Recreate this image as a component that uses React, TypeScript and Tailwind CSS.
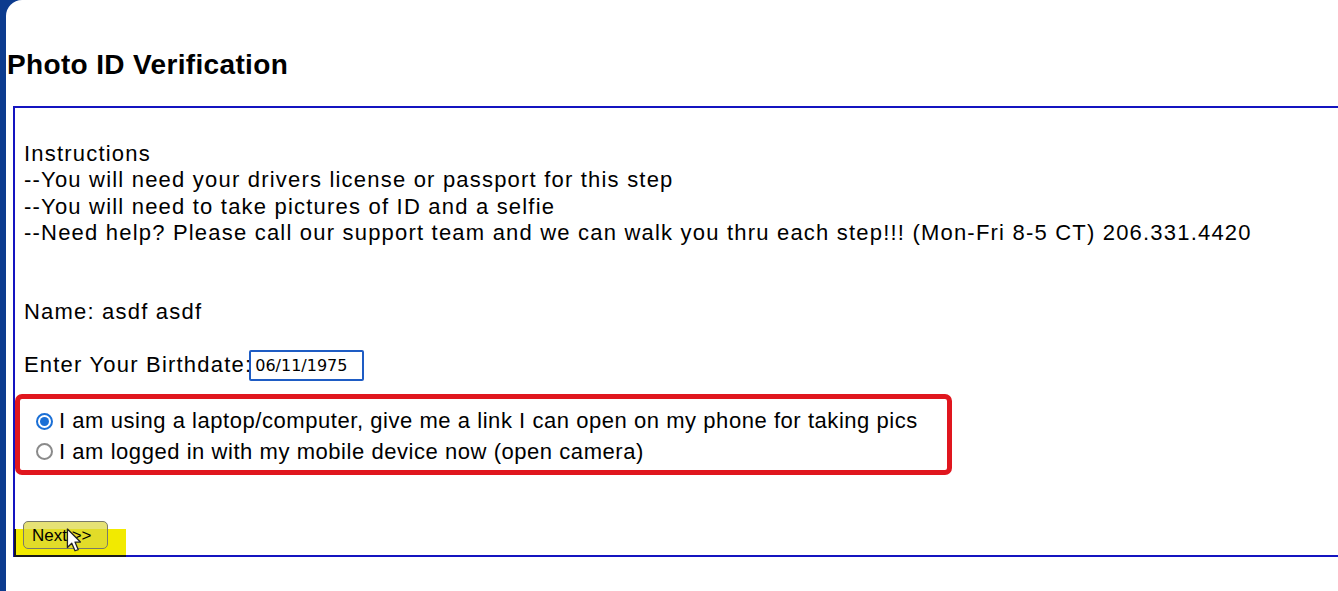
import React, { useState } from 'react';

const Radio: React.FC<{ checked: boolean; onClick: () => void }> = ({ checked, onClick }) => (
  <span
    onClick={onClick}
    className={`inline-flex items-center justify-center w-[17px] h-[17px] rounded-full border-2 bg-white shrink-0 ${
      checked ? 'border-[#1a6fd6]' : 'border-[#8a8a8a]'
    }`}
  >
    {checked && <span className="w-[9px] h-[9px] rounded-full bg-[#1a6fd6]" />}
  </span>
);

const Cursor: React.FC = () => (
  <svg width="18" height="26" viewBox="0 0 16 24" className="absolute left-[52px] top-[7px]">
    <path
      d="M1 1 L1 18 L5 14 L8 21 L11 20 L8 13 L13 13 Z"
      fill="#ffffff"
      stroke="#222222"
      strokeWidth="1.2"
      strokeLinejoin="round"
    />
  </svg>
);

export default function App() {
  const [mode, setMode] = useState<'laptop' | 'mobile'>('laptop');
  const [birthdate, setBirthdate] = useState('06/11/1975');

  return (
    <div className="w-[1338px] h-[591px] overflow-hidden bg-[#0c3b8e] pl-[6px]" style={{ fontFamily: '"Liberation Sans", Arial, sans-serif' }}>
      <div className="h-full bg-white rounded-tl-[16px] pt-[48px] pl-[1px]">
        <h2 className="text-[28px] font-bold text-black leading-[34px] tracking-[0.35px] mb-[24px]">Photo ID Verification</h2>

        <div className="ml-[6px] w-[1400px] h-[451px] border-2 border-[#1414c0] pl-[9px] pt-[33px] text-[22px] leading-[26.3px] tracking-[1.2px] text-black">
          <div>Instructions</div>
          <div>--You will need your drivers license or passport for this step</div>
          <div>--You will need to take pictures of ID and a selfie</div>
          <div>--Need help? Please call our support team and we can walk you thru each step!!! (Mon-Fri 8-5 CT) 206.331.4420</div>

          <div className="mt-[53px]">Name: asdf asdf</div>

          <div className="mt-[24px] flex items-center">
            <span>Enter Your Birthdate:</span>
            <input
              value={birthdate}
              onChange={(e) => setBirthdate(e.target.value)}
              className="-ml-[3px] mt-[1px] w-[115px] h-[31px] border-2 border-[#1e5cc4] rounded-[2px] px-[4px] text-[16px] tracking-normal text-black outline-none"
              style={{ fontFamily: '"DejaVu Sans", Verdana, sans-serif' }}
            />
          </div>

          {/* device choice */}
          <div className="mt-[13px] -ml-[9px] w-[937px] h-[81px] border-[5px] border-[#e0161e] rounded-[7px] pl-[16px] pt-[9px] tracking-[0.55px] whitespace-nowrap">
            <label className="flex items-center gap-[6px] cursor-pointer">
              <Radio checked={mode === 'laptop'} onClick={() => setMode('laptop')} />
              <span>I am using a laptop/computer, give me a link I can open on my phone for taking pics</span>
            </label>
            <label className="flex items-center gap-[6px] cursor-pointer mt-[4px]">
              <Radio checked={mode === 'mobile'} onClick={() => setMode('mobile')} />
              <span>I am logged in with my mobile device now (open camera)</span>
            </label>
          </div>

          <div className="relative mt-[46px] -ml-[10px] w-[112px] h-[34px]">
            <div className="absolute left-0 top-[8px] w-[112px] h-[28px] bg-[#f2ea00] border-l-2 border-b-2 border-[#1a1a1a]" />
            <button className="absolute left-[9px] top-0 w-[85px] h-[28px] rounded-[5px] border border-[#7a7a6a] bg-[#dcd63a]/70 text-[17px] tracking-normal text-black leading-none whitespace-nowrap text-left pl-[8px]">
              Next &gt;&gt;
            </button>
            <Cursor />
          </div>
        </div>
      </div>
    </div>
  );
}
